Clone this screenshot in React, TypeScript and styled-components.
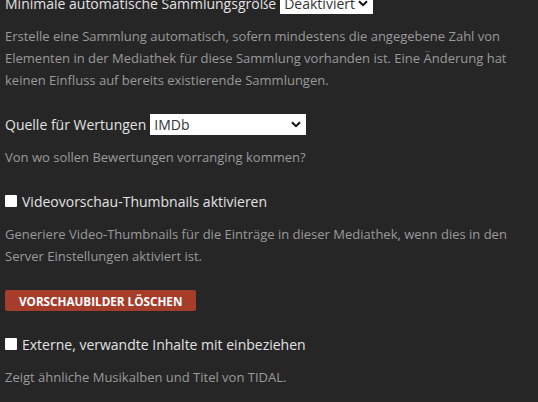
import styled, { createGlobalStyle } from 'styled-components'

const GlobalStyle = createGlobalStyle`
  html, body {
    margin: 0;
    padding: 0;
    background: #262626;
    overflow: hidden;
  }
  body {
    font-family: 'Open Sans', 'Noto Sans', sans-serif;
  }
`

const Page = styled.div`
  width: 538px;
  height: 402px;
  overflow: hidden;
  background: #262626;
`

// content is scrolled, first row starts above the fold
const Form = styled.div`
  display: flex;
  flex-direction: column;
  gap: 22px;
  padding: 0 5px;
  margin-top: -8px;
`

const Group = styled.div`
  display: flex;
  flex-direction: column;
`

const FieldRow = styled.label`
  display: flex;
  align-items: center;
  gap: 4px;
  height: 22px;
  color: #e2e2e2;
  font-size: 14px;
`

const SelectWrap = styled.div<{ $width: number }>`
  position: relative;
  width: ${(p) => p.$width}px;
  height: 21px;
`

const Select = styled.select`
  appearance: none;
  width: 100%;
  height: 100%;
  border: 0;
  border-radius: 0;
  background: #fff;
  color: #333;
  font-family: inherit;
  font-size: 14px;
  padding: 0 16px 0 4px;
  outline: none;
`

const Chevron = styled.svg`
  position: absolute;
  right: 5px;
  top: 7px;
  pointer-events: none;
`

const CheckRow = styled.label`
  display: flex;
  align-items: center;
  gap: 5px;
  height: 22px;
  color: #e2e2e2;
  font-size: 14px;
`

const Box = styled.span`
  width: 12px;
  height: 12px;
  background: #fff;
  border-radius: 1px;
  flex: none;
`

const Help = styled.p`
  margin: 11px 0 0;
  color: #9a9a9a;
  font-size: 13px;
  line-height: 22px;
  max-width: 528px;
`

const DangerButton = styled.button`
  align-self: flex-start;
  margin-top: 23px;
  height: 21px;
  padding: 0 14px;
  border: 0;
  border-radius: 2px;
  background: #a53d2a;
  color: #fff;
  font-family: inherit;
  font-weight: 700;
  font-size: 11.7px;
  text-transform: uppercase;
`

type DropdownProps = {
  width: number
  value: string
}

const Dropdown = ({ width, value }: DropdownProps) => (
  <SelectWrap $width={width}>
    <Select defaultValue={value}>
      <option>{value}</option>
    </Select>
    <Chevron width="10" height="7" viewBox="0 0 10 7">
      <path d="M1 1.2 L5 5.2 L9 1.2" fill="none" stroke="#111" strokeWidth="2" />
    </Chevron>
  </SelectWrap>
)

export default function App() {
  return (
    <Page>
      <GlobalStyle />
      <Form>
        <Group>
          <FieldRow>
            Minimale automatische Sammlungsgröße
            <Dropdown width={93} value="Deaktiviert" />
          </FieldRow>
          <Help>
            Erstelle eine Sammlung automatisch, sofern mindestens die angegebene Zahl von
            Elementen in der Mediathek für diese Sammlung vorhanden ist. Eine Änderung hat
            keinen Einfluss auf bereits existierende Sammlungen.
          </Help>
        </Group>

        <Group>
          <FieldRow>
            Quelle für Wertungen
            <Dropdown width={156} value="IMDb" />
          </FieldRow>
          <Help>Von wo sollen Bewertungen vorranging kommen?</Help>
        </Group>

        <Group>
          <CheckRow>
            <Box />
            Videovorschau-Thumbnails aktivieren
          </CheckRow>
          <Help>
            Generiere Video-Thumbnails für die Einträge in dieser Mediathek, wenn dies in den
            Server Einstellungen aktiviert ist.
          </Help>
          <DangerButton>Vorschaubilder löschen</DangerButton>
        </Group>

        <Group>
          <CheckRow>
            <Box />
            Externe, verwandte Inhalte mit einbeziehen
          </CheckRow>
          <Help>Zeigt ähnliche Musikalben und Titel von TIDAL.</Help>
        </Group>
      </Form>
    </Page>
  )
}
